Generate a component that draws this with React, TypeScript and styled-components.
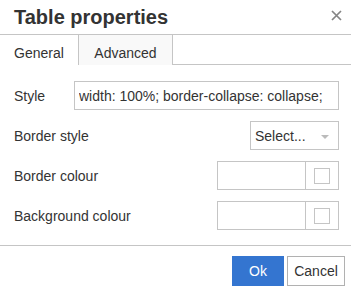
import React from "react";
import styled, { createGlobalStyle } from "styled-components";

const GlobalStyle = createGlobalStyle`
  html, body {
    margin: 0;
    padding: 0;
    background: #ffffff;
  }
  body {
    font-family: "Liberation Sans", Arial, sans-serif;
    color: #333333;
  }
`;

const Dialog = styled.div`
  width: 351px;
  height: 297px;
  background: #ffffff;
  display: flex;
  flex-direction: column;
  font-family: "Liberation Sans", Arial, sans-serif;
`;

const Header = styled.div`
  height: 34px;
  border-bottom: 1px solid #c5c5c5;
  display: flex;
  justify-content: space-between;
  align-items: flex-start;
  padding-left: 14px;
`;

const Title = styled.div`
  padding-top: 7px;
  font-size: 20px;
  line-height: 20px;
  font-weight: bold;
  color: #333333;
`;

const CloseButton = styled.button`
  border: 0;
  background: transparent;
  padding: 0;
  margin: 10px 9px 0 0;
  width: 11px;
  height: 11px;
  display: flex;
  cursor: pointer;
`;

const TabStrip = styled.div`
  display: flex;
  height: 30px;
`;

const Tab = styled.div<{ $active?: boolean; $width: number }>`
  box-sizing: border-box;
  width: ${(p) => p.$width}px;
  height: 30px;
  padding-top: 10px;
  border-right: 1px solid #c5c5c5;
  background: ${(p) => (p.$active ? "#f9f9f9" : "#ffffff")};
  font-size: 14px;
  line-height: 16px;
  text-align: center;
  color: #333333;
`;

const TabFill = styled.div`
  flex: 1;
  box-sizing: border-box;
  height: 30px;
  border-bottom: 1px solid #c5c5c5;
`;

const Body = styled.div`
  display: flex;
  flex-direction: column;
  gap: 11px;
  padding: 16px 12px 15px 14px;
`;

const Row = styled.div`
  display: flex;
  align-items: center;
  justify-content: space-between;
  height: 29px;
`;

const Label = styled.label`
  font-size: 14px;
  color: #333333;
`;

const TextInput = styled.input<{ $width: number }>`
  box-sizing: border-box;
  width: ${(p) => p.$width}px;
  height: 29px;
  border: 1px solid #c5c5c5;
  padding: 0 4px;
  font-family: "Liberation Sans", Arial, sans-serif;
  font-size: 14px;
  color: #333333;
  outline: none;
`;

const SelectBox = styled.div`
  box-sizing: border-box;
  width: 89px;
  height: 29px;
  border: 1px solid #c5c5c5;
  display: flex;
  align-items: center;
  justify-content: space-between;
  padding: 0 9px 0 4px;
  font-size: 14px;
  color: #333333;
`;

const Caret = styled.span`
  width: 0;
  height: 0;
  margin-top: 3px;
  border-left: 4px solid transparent;
  border-right: 4px solid transparent;
  border-top: 4px solid #bbbbbb;
`;

const ColourField = styled.div`
  box-sizing: border-box;
  width: 122px;
  height: 29px;
  border: 1px solid #c5c5c5;
  display: flex;
`;

const ColourText = styled.div`
  flex: 1;
  border-right: 1px solid #c5c5c5;
`;

const SwatchCell = styled.div`
  width: 32px;
  display: flex;
  align-items: center;
  justify-content: center;
`;

const Swatch = styled.div`
  box-sizing: border-box;
  width: 16px;
  height: 16px;
  border: 1px solid #c5c5c5;
  background: #ffffff;
`;

const Footer = styled.div`
  border-top: 1px solid #c5c5c5;
  display: flex;
  justify-content: flex-end;
  gap: 3px;
  padding: 10px 6px 10px 0;
`;

const Button = styled.button<{ $primary?: boolean; $width: number }>`
  box-sizing: border-box;
  width: ${(p) => p.$width}px;
  height: 30px;
  padding: 0;
  border: 1px solid ${(p) => (p.$primary ? "#3475d0" : "#b1b1b1")};
  background: ${(p) => (p.$primary ? "#3475d0" : "#ffffff")};
  color: ${(p) => (p.$primary ? "#ffffff" : "#333333")};
  font-family: "Liberation Sans", Arial, sans-serif;
  font-size: 14px;
  cursor: pointer;
`;

const ColourRow = ({ label }: { label: string }) => (
  <Row>
    <Label>{label}</Label>
    <ColourField>
      <ColourText />
      <SwatchCell>
        <Swatch />
      </SwatchCell>
    </ColourField>
  </Row>
);

export default function App() {
  return (
    <>
      <GlobalStyle />
      <Dialog>
        <Header>
          <Title>Table properties</Title>
          <CloseButton aria-label="Close">
            <svg width="11" height="11" viewBox="0 0 11 11">
              <path d="M1 1L10 10M10 1L1 10" stroke="#858585" strokeWidth="1.7" />
            </svg>
          </CloseButton>
        </Header>
        <TabStrip>
          <Tab $width={79}>General</Tab>
          <Tab $width={94} $active>
            Advanced
          </Tab>
          <TabFill />
        </TabStrip>
        <Body>
          <Row>
            <Label>Style</Label>
            <TextInput $width={265} defaultValue="width: 100%; border-collapse: collapse;" />
          </Row>
          <Row>
            <Label>Border style</Label>
            <SelectBox>
              <span>Select...</span>
              <Caret />
            </SelectBox>
          </Row>
          <ColourRow label="Border colour" />
          <ColourRow label="Background colour" />
        </Body>
        <Footer>
          <Button $primary $width={52}>
            Ok
          </Button>
          <Button $width={58}>Cancel</Button>
        </Footer>
      </Dialog>
    </>
  );
}
